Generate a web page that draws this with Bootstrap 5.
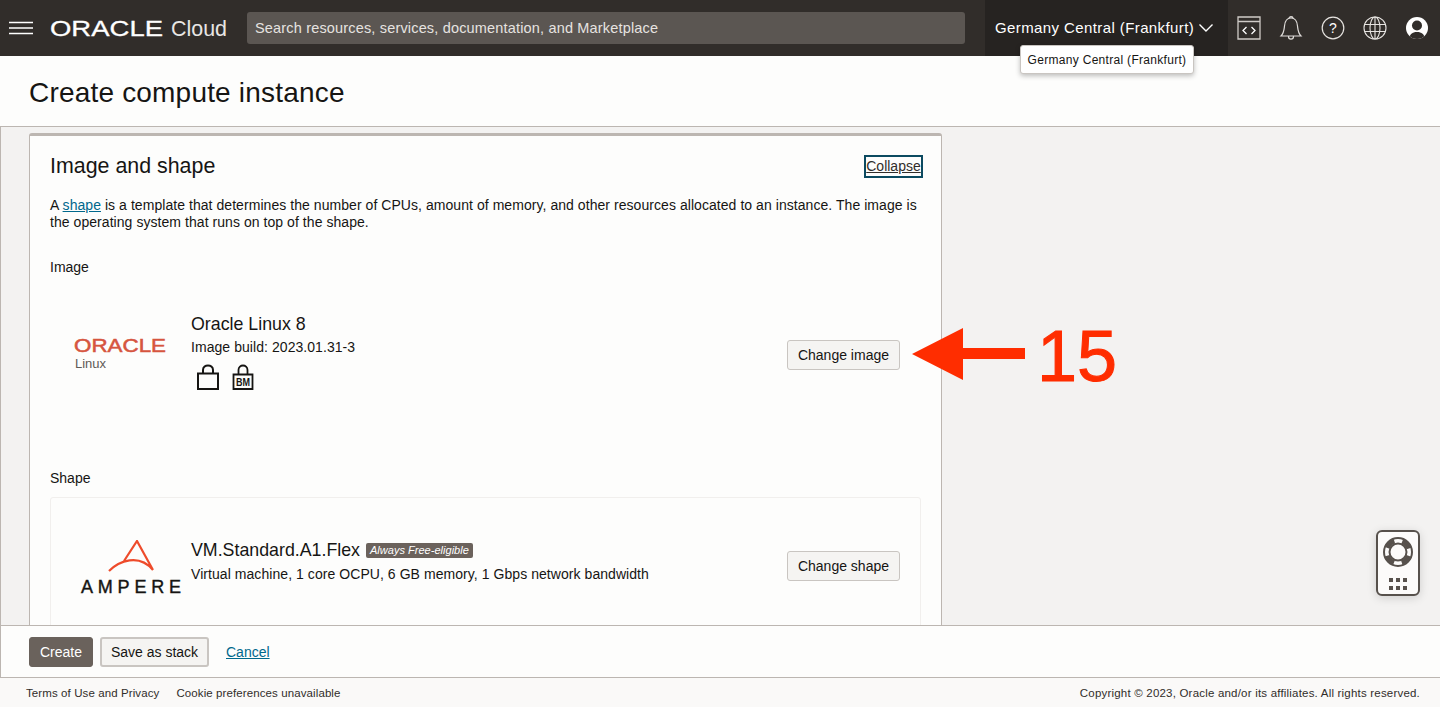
<!DOCTYPE html>
<html lang="en">
<head>
<meta charset="utf-8">
<title>Create compute instance</title>
<link href="https://cdn.jsdelivr.net/npm/bootstrap@5.3.0/dist/css/bootstrap.min.css" rel="stylesheet">
<style>
html,body{height:100%;overflow:hidden}
body{font-family:"Liberation Sans",Arial,sans-serif;font-size:14px;color:#161513;background:#fdfdfc}
.shell{height:707px;position:relative}
.topbar{height:56px;background:#312d2a;color:#fff;flex:none}
.burger{width:24px;margin-left:9px;margin-right:17px}
.logo-box{width:178px;margin-right:19px}
.search-box{width:718px;height:32px;background:#5b5652;border-radius:3px;color:#e6e3e0;font-size:14.5px;padding:2px 0 0 8px;letter-spacing:.17px}
.region-box{width:243px;height:56px;background:#262321;margin-left:20px;padding-left:10px;font-size:15px;letter-spacing:.4px;white-space:nowrap}
.topicons{gap:16px;padding-left:9px}
.gap-extra{margin-left:2px}
.region-tip{position:absolute;left:1020px;top:45px;width:174px;height:29px;background:#fff;border:1px solid #c9c5c1;border-radius:3px;box-shadow:0 2px 5px rgba(0,0,0,.25);font-size:12px;color:#161513;letter-spacing:.3px;z-index:5}
.page-head{height:71px;flex:none;border-bottom:1px solid #bcb6b1;padding:3px 0 0 29px;background:#fdfdfc}
.page-head h1{font-size:28px;font-weight:400;margin:0;letter-spacing:.19px}
.scroller{flex:1 1 auto;min-height:0;overflow:hidden;background:#f3f2f1;border-left:1px solid #bcb6b1;padding:6px 0 0 28px}
.panel-main{width:913px;background:#fdfdfc;border:1px solid #bcb6b1;border-top-width:3px;border-radius:3px 3px 0 0;padding:18px 20px 0;height:700px}
.panel-main h2{font-size:21.4px;font-weight:400;margin:0;line-height:25px}
.collapse-link{border:2px solid #0c4a60;color:#312d2a;font-size:14px;line-height:19px;display:block;width:59px;margin-right:-2px;text-align:center;text-decoration:underline}
.intro{margin:18px 0 0;line-height:17px;font-size:14px;letter-spacing:.055px}
.intro a,.cancel-link{color:#00688c}
.sect-label{line-height:18px}
.label-image{margin-top:27px}
.label-shape{margin-top:35px}
.img-row{height:158px;padding:0 21px 0 0}
.logo-cell{width:141px;flex:none}
.logo-cell-inner{width:140px;flex:none;padding-top:42px}
.text-lift{margin-top:-6px}
.row-title{font-size:17.8px;line-height:20px;color:#161513}
.row-sub{font-size:14px;line-height:18px;letter-spacing:.06px}
.sub-gap{margin-top:4px}
.sub-gap-wide{margin-top:5px}
.badge-icons{gap:12px;margin:8px 0 0 5px;height:26px}
.pic-btn,.foot-btn{background:#f5f4f2;border:1px solid #c9c5c1;border-radius:3px;color:#161513;font-size:14px;line-height:18px;padding:5px 10px}
.pic-btn:hover{background:#f5f4f2;border-color:#c9c5c1;color:#161513}
.shape-box{height:170px;border:1px solid #f1efed;border-radius:3px;padding:0 20px 0 0;margin-top:10px}
.shape-text{padding-top:42px}
.shape-action{padding-top:53px}
.free-tag{background:#6b625c;color:#fff;font-style:italic;font-size:11px;line-height:15px;padding:0 4px;border-radius:2px;margin-left:6px;letter-spacing:.02px;display:inline-block;vertical-align:2px}
.action-bar{height:53px;flex:none;border-top:1px solid #bcb6b1;border-bottom:1px solid #bcb6b1;border-left:1px solid #bcb6b1;padding-left:28px;gap:7px;background:#fdfdfc}
.foot-primary{background:#6a625c;border:1px solid #6a625c;color:#fff;border-radius:3px;font-size:14px;line-height:18px;padding:5px 10px;width:64px}
.foot-btn{border-width:2px;padding:4px 0;width:109px;margin-right:10px;white-space:nowrap}
.cancel-link{padding-top:2px}
.site-foot{height:29px;flex:none;background:#faf9f8;font-size:11.5px;padding:3px 20px 0 26px;color:#312d2a;letter-spacing:.1px}
.copy-note{letter-spacing:.2px}
.foot-links{gap:17px}
.help-widget{position:absolute;left:1376px;top:530px;width:44px;height:66px;background:#fcfbfa;border:2px solid #57514c;border-radius:6px;box-shadow:0 2px 10px rgba(0,0,0,.15)}
.note-arrow{position:absolute;left:911px;top:316px;overflow:visible}
.ring-svg{margin-top:4px}
.dots-svg{margin-top:9px}
</style>
</head>
<body>
<div class="shell d-flex flex-column">
  <header class="topbar d-flex align-items-center">
    <svg class="burger" viewBox="0 0 24 14" height="14" aria-hidden="true"><path d="M0 1.500h24M0 7h24M0 12.500h24" stroke="#fff" stroke-width="1.600"/></svg>
    <svg class="logo-box" viewBox="0 0 178 24" height="24" role="img" aria-label="ORACLE Cloud">
      <text x="0" y="20" font-family="Liberation Sans" font-size="22" fill="#fff" stroke="#fff" stroke-width=".3" textLength="113" lengthAdjust="spacingAndGlyphs">ORACLE</text>
      <text x="121" y="20" font-family="Liberation Sans" font-size="22" fill="#e8e6e4" textLength="56" lengthAdjust="spacingAndGlyphs">Cloud</text>
    </svg>
    <div class="search-box d-flex align-items-center">Search resources, services, documentation, and Marketplace</div>
    <div class="region-box d-flex align-items-center">Germany Central (Frankfurt)
      <svg class="ms-1" width="16" height="10" viewBox="0 0 16 10" aria-hidden="true"><path d="M1.500 1.500 8 8l6.500-6.500" fill="none" stroke="#fff" stroke-width="1.400"/></svg>
    </div>
    <div class="topicons d-flex align-items-center">
      <svg width="24" height="24" viewBox="0 0 24 24" aria-hidden="true"><path d="M1 1h22v22H1zM1 5.500h22" fill="none" stroke="#cfcbc7" stroke-width="1.300"/><path d="M9.500 11 6 14.500 9.500 18M14.500 11l3.500 3.500-3.500 3.500" fill="none" stroke="#fff" stroke-width="1.300"/></svg>
      <svg width="28" height="26" viewBox="0 0 28 26" aria-hidden="true"><path d="M4 21c3-3 3-6 3.500-10C8 5 11 3 14 3s6 2 6.500 8c.5 4 .5 7 3.500 10zM12 3.500C12 1 16 1 16 3.500M11.500 21.500c0 3.500 5 3.500 5 0" fill="none" stroke="#dfdcd9" stroke-width="1.200"/></svg>
      <svg width="24" height="24" viewBox="0 0 24 24" aria-hidden="true"><circle cx="12" cy="12" r="10.800" fill="none" stroke="#e6e3e0" stroke-width="1.200"/><text x="12" y="17" text-anchor="middle" font-family="Liberation Sans" font-size="14" fill="#fff">?</text></svg>
      <svg class="gap-extra" width="24" height="24" viewBox="0 0 24 24" aria-hidden="true"><g fill="none" stroke="#e6e3e0" stroke-width="1.100"><circle cx="12" cy="12" r="11"/><ellipse cx="12" cy="12" rx="5" ry="11"/><path d="M12 1v22M1.500 8.500h21M1.500 15.500h21"/></g></svg>
      <svg class="gap-extra" width="24" height="24" viewBox="0 0 24 24" aria-hidden="true"><defs><clipPath id="userclip"><circle cx="12" cy="12" r="11"/></clipPath></defs><circle cx="12" cy="12" r="11" fill="#fff"/><g clip-path="url(#userclip)" fill="#312d2a"><circle cx="12" cy="9.500" r="5"/><path d="M4 24c0-5 3-8 8-8s8 3 8 8z"/></g></svg>
    </div>
  </header>
  <div class="region-tip d-flex align-items-center justify-content-center">Germany Central (Frankfurt)</div>

  <div class="page-head d-flex align-items-center"><h1>Create compute instance</h1></div>

  <main class="scroller">
    <section class="panel-main">
      <div class="d-flex justify-content-between align-items-center">
        <h2>Image and shape</h2>
        <a class="collapse-link" href="#">Collapse</a>
      </div>
      <p class="intro">A <a href="#">shape</a> is a template that determines the number of CPUs, amount of memory, and other resources allocated to an instance. The image is the operating system that runs on top of the shape.</p>
      <div class="sect-label label-image">Image</div>
      <div class="img-row d-flex align-items-center">
        <div class="logo-cell">
          <svg width="120" height="40" viewBox="0 0 120 40" role="img" aria-label="ORACLE Linux">
            <text x="24" y="17" font-family="Liberation Sans" font-size="18" fill="#d6553f" stroke="#d6553f" stroke-width=".5" textLength="92" lengthAdjust="spacingAndGlyphs">ORACLE</text>
            <text x="25" y="33" font-family="Liberation Sans" font-size="13" fill="#5f5a56">Linux</text>
          </svg>
        </div>
        <div class="flex-grow-1 text-lift">
          <div class="row-title">Oracle Linux 8</div>
          <div class="row-sub sub-gap">Image build: 2023.01.31-3</div>
          <div class="badge-icons d-flex align-items-end">
            <svg width="24" height="26" viewBox="0 0 24 26" aria-hidden="true"><path d="M2 9.500h20V25H2zM7 9.500V6C7 0 17 0 17 6v3.500" fill="none" stroke="#161513" stroke-width="2"/></svg>
            <svg width="22" height="26" viewBox="0 0 22 26" aria-hidden="true"><path d="M1.500 10.500h19V25h-19zM6.500 10.500V6c0-6 9-6 9 0v4.500" fill="none" stroke="#161513" stroke-width="1.800"/><text x="11" y="22" text-anchor="middle" font-family="Liberation Sans" font-size="10" font-weight="700" fill="#161513" textLength="14" lengthAdjust="spacingAndGlyphs">BM</text></svg>
          </div>
        </div>
        <button type="button" class="btn pic-btn">Change image</button>
      </div>
      <div class="sect-label label-shape">Shape</div>
      <div class="shape-box d-flex">
        <div class="logo-cell-inner">
          <svg width="135" height="56" viewBox="0 0 135 56" role="img" aria-label="AMPERE">
            <path d="M58 31c10-10 30-18 44-1M73 21 86 1l16 29" fill="none" stroke="#ee4b2b" stroke-width="2.200"/>
            <text x="30" y="53" font-family="Liberation Sans" font-size="18" fill="#161513" stroke="#161513" stroke-width=".4" textLength="100" lengthAdjust="spacing">AMPERE</text>
          </svg>
        </div>
        <div class="flex-grow-1 shape-text">
          <div class="row-title">VM.Standard.A1.Flex<span class="free-tag">Always Free-eligible</span></div>
          <div class="row-sub sub-gap-wide">Virtual machine, 1 core OCPU, 6 GB memory, 1 Gbps network bandwidth</div>
        </div>
        <div class="shape-action"><button type="button" class="btn pic-btn">Change shape</button></div>
      </div>
    </section>
  </main>

  <div class="action-bar d-flex align-items-center">
    <button type="button" class="btn foot-primary">Create</button>
    <button type="button" class="btn foot-btn">Save as stack</button>
    <a class="cancel-link" href="#">Cancel</a>
  </div>
  <footer class="site-foot d-flex align-items-center justify-content-between">
    <div class="d-flex foot-links"><span>Terms of Use and Privacy</span><span>Cookie preferences unavailable</span></div>
    <div class="copy-note">Copyright © 2023, Oracle and/or its affiliates. All rights reserved.</div>
  </footer>

  <svg class="note-arrow" width="216" height="86" viewBox="0 0 216 86" role="img" aria-label="15">
    <path d="M1 38 52 12v20h62v11H52v21z" fill="#ff2d00"/>
    <text x="126" y="65" font-family="Liberation Sans" font-size="72" fill="#ff2d00" stroke="#ff2d00" stroke-width="1">15</text>
  </svg>

  <div class="help-widget d-flex flex-column align-items-center">
    <svg class="ring-svg" width="32" height="32" viewBox="0 0 32 32" aria-hidden="true"><g fill="none" stroke="#57514c"><circle cx="16" cy="16" r="14" stroke-width="2"/><circle cx="16" cy="16" r="8.500" stroke-width="2"/><circle cx="16" cy="16" r="11.500" stroke-width="5" stroke-dasharray="10 8.065" stroke-dashoffset="-4"/></g></svg>
    <svg class="dots-svg" width="20" height="14" viewBox="0 0 20 14" aria-hidden="true"><path d="M1 1h4v4H1zM8 1h4v4H8zM15 1h4v4h-4zM1 9h4v4H1zM8 9h4v4H8zM15 9h4v4h-4z" fill="#57514c"/></svg>
  </div>
</div>
<script src="https://cdn.jsdelivr.net/npm/bootstrap@5.3.0/dist/js/bootstrap.bundle.min.js"></script>
</body>
</html>
